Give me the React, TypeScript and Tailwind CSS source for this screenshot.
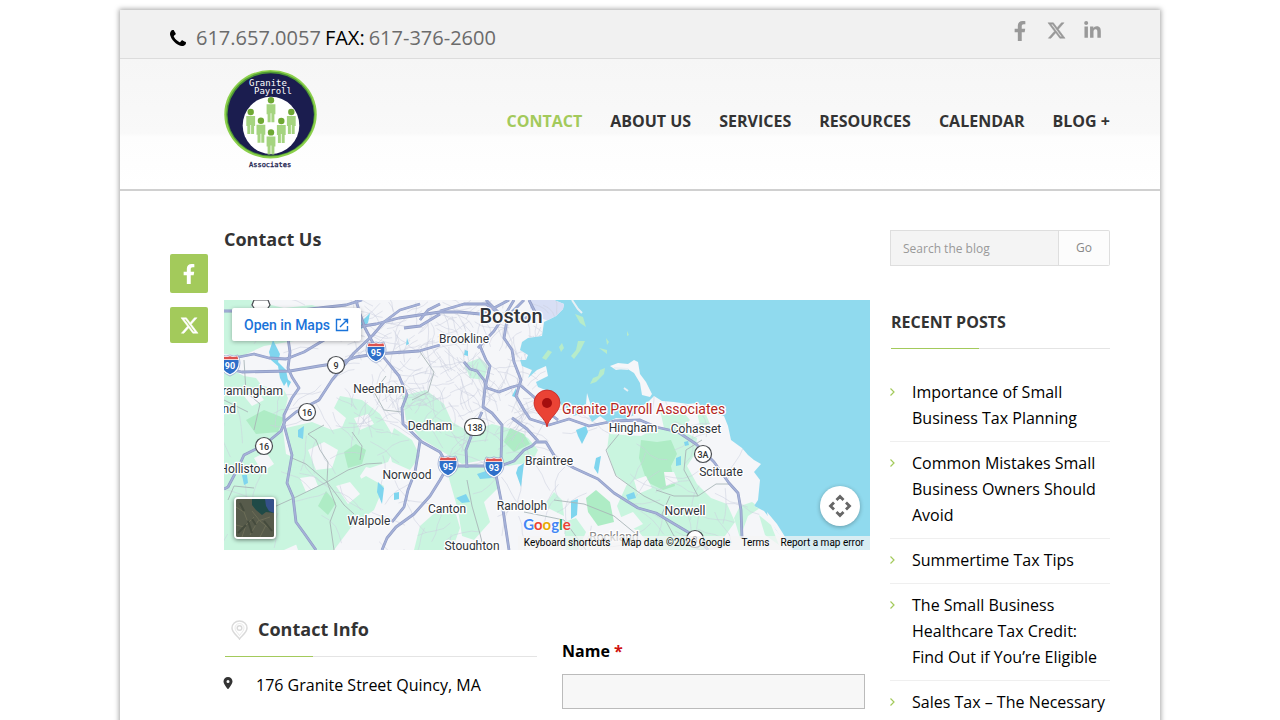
import React from "react";
import { FaFacebookF, FaLinkedinIn } from "react-icons/fa";
import { FaLocationDot, FaXTwitter } from "react-icons/fa6";

const NAV = ["Contact", "About Us", "Services", "Resources", "Calendar", "Blog +"];

const POSTS = [
  "Importance of Small Business Tax Planning",
  "Common Mistakes Small Business Owners Should Avoid",
  "Summertime Tax Tips",
  "The Small Business Healthcare Tax Credit: Find Out if You’re Eligible",
  "Sales Tax – The Necessary",
];

const PEOPLE: [number, number][] = [
  [47, 30.3],
  [26.7, 42],
  [67.3, 42],
  [36.9, 50.8],
  [57.3, 51],
  [47, 62.4],
];

function PhoneIcon() {
  return (
    <svg viewBox="192 128 1408 1408" className="mr-[10px] h-4 w-4 text-black" fill="currentColor" aria-hidden="true">
      <path d="M1600 1240q0 27-10 70.500t-21 68.500q-21 50-122 106-94 51-186 51-27 0-53-3.500t-57.500-12.500-47-14.500-55.500-20.500-49-18q-98-35-175-83-127-79-264-216t-216-264q-48-77-83-175-3-9-18-49t-20.500-55.500-14.500-47-12.500-57.500-3.500-53q0-92 51-186 56-101 106-122 25-11 68.500-21t70.500-10q14 0 21 3 18 6 53 76 11 19 30 54t35 63.500 31 53.500q3 4 17.500 25t21.500 35.500 7 28.500q0 20-28.500 50t-62 55-62 53-28.500 46q0 9 5 22.500t8.500 20.500 14 24 11.500 19q76 137 174 235t235 174q2 1 19 11.500t24 14 20.500 8.500 22.500 5q18 0 46-28.500t53-62 55-62 50-28.500q14 0 28.500 7t35.500 21.500 25 17.500q25 15 53.500 31t63.500 35 54 30q70 35 76 53 3 7 3 21z" />
    </svg>
  );
}

function Logo() {
  return (
    <svg viewBox="0 0 93 100" className="h-[100px] w-[93px]" role="img" aria-label="Granite Payroll Associates">
      <ellipse cx="46.5" cy="44.2" rx="46.2" ry="44.2" fill="#8bd04b" />
      <ellipse cx="46.5" cy="44" rx="44.3" ry="42.5" fill="#4f9a35" />
      <ellipse cx="46.7" cy="44.4" rx="43.2" ry="41.2" fill="#1b1d4f" />
      <ellipse cx="47" cy="55.4" rx="28.3" ry="28.6" fill="#fff" />
      {PEOPLE.map(([x, y]) => (
        <g key={`${x}-${y}`} transform={`translate(${x} ${y})`}>
          <circle r="3.2" fill="#6fa834" />
          <path d="M-4.4 4h8.800v10h-1v8h-3v-9h-.8v9h-3v-8h-1z" fill="#a5d480" />
        </g>
      ))}
      <g fontFamily="'DejaVu Sans Mono', monospace">
        <text x="25" y="16" fontSize="9" fill="#fff">Granite</text>
        <text x="30" y="24" fontSize="9" fill="#fff">Payroll</text>
        <text x="25" y="97" fontSize="7" fill="#1b1d4f" stroke="#1b1d4f" strokeWidth=".3">Associates</text>
      </g>
    </svg>
  );
}

const LAND =
  "M0 0H330L340 4L339 9L332 16L320 22L318 36L304 38L298 42L296 50L304 55L302 60L296 60L298 66L308 70L304 78L313 70L322 66L324 76L312 82L314 87L324 91L332 98L340 108L350 116L356 114L358 106L362 104L363 93L367 106L364 114L368 122L376 116L384 122L392 118L402 119L410 115L416 107L424 102L430 96L438 101L450 102L464 104L474 103L482 110L490 108L493 114L500 116L504 126L507 140L518 148L524 155L530 160L537 164L530 172L536 180L534 200L530 206L540 211L547 220L552 230L560 240L566 250H0Z";

const GREENS = [
  "M0 0h26l34 8 28-3 22 7 18 14-28 8-30 7-30 5-22 10-18-2z",
  "M0 66l20 10 12 2 6 8 22 4 4 8-6 24 4 32 18 8 10-6 8-20 18-4 6-14-12-10 6-12 22 4 18 14 12 20-4 18-20 12-8 12 6 14-16 8-22-2-14 14-12 32-18 8H0z",
  "M60 190l22-18 28-6 18 18 14-8 18 10-10 24-22 16-18 24H74l-10-30z",
  "M62 128l26-6 20 8 24-6 30 6 10 14-8 18-18 6-16-4-18 6-22-6-22 4z",
  "M178 96l24-6 18 14 8 18 18 10 22-8 16 4 20 10 10 12-6 12-24 4-24-6-22 4-22-14-20-12-14-18z",
  "M222 168l30-4 20 8 2 16-14 14 6 20-16 18-12-4-4-26z",
  "M196 226l18-16 18 4 4 14-8 22h-38z",
  "M385 134l32 2 16-8 22 2 18 8-2 16-8 12 10 18 14 14 16 6 8 18-10 14-18 12-10 8h-38l-20-24-16-10-6-16 10-22-12-10-8-24z",
  "M320 206l10-14 8 8 2 16z",
  "M240 64l16-6 8 8-4 14-14-2z",
  "M436 110l18-4 12 14-10 12-16-4zM472 108l8 2 6 14-10 2z",
  "M340 222l12-4 10 14-8 18h-12z",
  "M170 128l18 12 8 16-10 14-18-8-4-16z",
  "M516 206l12-4 8 6-12 8-8 22-6-20zM535 215l12 10 8 20-14-10z",
];

const DEEP_GREENS = [
  "M417 140l16 2 14-2 6 14-6 12 4 20-12 4-16-8-8-24z",
  "M94 206l8-15 10 12-8 12z",
  "M120 152l12-8 10 6-4 14-14 4z",
  "M22 120l18-10 20 8-6 14-22 2z",
  "M362 198l10-8 14 12 4 20-16 4-10-14z",
  "M286 128l14 6 6 10-16 8-10-10z",
];

const PONDS = [
  "M49 40l4 8 3 6-2 8 8 8 2 10-4 6-4-8-2-12-7-6-2-8z",
  "M62 78l5 4-3 6zM74 130l6-4-1 13-5-2zM18 175l5 0 1 8-4 2z",
  "M137 22l9-9-2 10-8 7z",
  "M154 182l6 6-2 16-5-12zM170 193l5-1 0 7-5 1z",
  "M294 167l6-4-3 24-5-14zM253 174l9-3 6 7-12 1z",
  "M347 201l7-2-1 16-6 4z",
  "M352 130l10-4 2 6-6 12-4-8zM372 158l5-2-3 18-4-6z",
  "M232 198l10-4 4 8-8 1zM183 38l2 6-3 1z",
  "M452 158l5-2 0 9-5 1zM460 142l4-1 1 4-4 1zM402 195l8-3 2 6-8 2z",
  "M241 50l3 1 0 5-4-1zM288 96l4-8 1 10z",
];

const HIGHWAYS = [
  "M0 60L30 54L45 58L62 59L80 52L95 43L112 33L132 27L152 24L175 18L216 12L235 12L256 14L270 8L285 0",
  "M0 11L30 11L62 12L95 8L122 5L138 0",
  "M0 68L18 72L66 71L95 66L115 63L132 57L152 54L195 51L216 45",
  "M132 0L136 14L141 28L150 45L162 60L175 76L183 95L178 108L179 124L198 142L216 152L224 166L276 166L290 161L300 150L308 146L312 142L322 142L331 157L350 168L374 179L390 193L414 208L432 213L452 225L474 238L484 250",
  "M196 4L176 10L160 22L149 35L130 53L108 80L95 100L72 112L61 121L57 131L40 145L20 155L14 168L4 187L0 189",
  "M64 38L66 52L64 68L68 77L75 88L68 98L60 115L60 125L68 155L63 183L69 197L72 222L80 233L92 250",
  "M224 166L216 180L206 196L190 214L172 227L163 238L158 250",
  "M196 141L194 154L191 172L184 190L180 207L168 222",
  "M283 20L280 38L288 50L290 62L297 80L292 96L300 110L306 119L325 125L345 119L365 126L390 121L416 120L432 127L454 132L472 144L490 162L505 183L514 193L517 210L518 238",
  "M296 85L310 97L318 108L334 120",
  "M240 62L246 69L253 71L260 80L263 88L275 92L288 87L296 85",
  "M256 46L262 60L266 66L261 88L259 107L268 113L278 125L277 160L272 175L279 210L285 250",
  "M216 11L240 4L262 4L282 18L300 0M254 48L270 31L284 10L290 0M262 0L276 14L296 22M305 0L312 14L296 20",
  "M288 118L303 129L314 141M243 168L242 150L248 134L258 112",
  "M216 4L204 10L196 20M216 14L196 26L180 28",
];

const LOCALS = [
  "M68 158L82 164L103 182L112 194L120 205L130 214",
  "M50 207L72 197L103 182L124 170L142 164L158 163",
  "M103 182L104 162L96 150L92 140L84 134L100 125",
  "M103 182L112 206L106 222L110 250",
  "M136 160L138 146L128 132",
  "M243 180L248 206L256 234L260 250",
  "M395 134L382 150L392 176L420 196L440 206L480 215",
  "M432 190L450 196L474 196L492 184L505 184M446 196L438 214L450 236L476 250",
  "M474 196L460 170L462 150L478 140",
  "M20 60L22 92L36 104L30 130M0 100L24 112M30 188L10 186L4 200",
  "M162 76L150 92L160 110L178 112M196 52L210 72L204 92L188 100",
  "M330 200L360 204L390 216L412 234M300 212L340 220L362 250",
];

/* Repeatable pseudo-random side streets, denser around the city */
function sideStreets() {
  let seed = 7;
  const rnd = () => {
    seed = (seed * 16807) % 2147483647;
    return seed / 2147483647;
  };
  const out: string[] = [];
  for (let i = 0; i < 400; i++) {
    const city = i < 220;
    let x = city ? 130 + rnd() * 190 : rnd() * 530;
    let y = city ? rnd() * 135 : rnd() * 250;
    let a = rnd() * Math.PI * 2;
    let d = `M${x.toFixed(1)} ${y.toFixed(1)}`;
    for (let k = 0; k < 4; k++) {
      a += (rnd() - 0.5) * 0.9;
      const len = city ? 6 : 9;
      x += Math.cos(a) * len;
      y += Math.sin(a) * len;
      d += `L${x.toFixed(1)} ${y.toFixed(1)}`;
    }
    out.push(d);
  }
  return out.join("");
}
const SIDE_STREETS = sideStreets();

type Town = { name: string; x: number; y: number; anchor?: "middle" | "end"; fill?: string };
const TOWNS: Town[] = [
  { name: "Brookline", x: 240, y: 43 },
  { name: "Needham", x: 155, y: 93 },
  { name: "Framingham", x: 59, y: 95, anchor: "end" },
  { name: "Ashland", x: 12, y: 113, anchor: "end" },
  { name: "Holliston", x: 43, y: 173, anchor: "end" },
  { name: "Dedham", x: 206, y: 130 },
  { name: "Norwood", x: 183, y: 179 },
  { name: "Walpole", x: 145, y: 225 },
  { name: "Canton", x: 223, y: 213 },
  { name: "Stoughton", x: 248, y: 250 },
  { name: "Randolph", x: 298, y: 210 },
  { name: "Braintree", x: 325, y: 165 },
  { name: "Hingham", x: 409, y: 132 },
  { name: "Cohasset", x: 472, y: 133 },
  { name: "Scituate", x: 497, y: 176 },
  { name: "Norwell", x: 461, y: 215 },
  { name: "Rockland", x: 390, y: 241, fill: "#888" },
];

function Interstate({ x, y, n }: { x: number; y: number; n: string }) {
  return (
    <g transform={`translate(${x} ${y})`}>
      <path d="M-8-10q4 2 8 0q4 2 8 0q2 4 2 8q0 9-10 13q-10-4-10-13q0-4 2-8z" fill="#fff" stroke="#7b8fc0" strokeWidth=".6" />
      <path d="M-7.400-8.800q4 1.600 7.400 0q3.400 1.600 7.400 0l.8 3H-8.200z" fill="#dc5350" />
      <path d="M-8.500-5h17q1.200 10-8.500 14.300q-9.700-4.300-8.500-14.300z" fill="#2e6fc9" />
      <text y="4" fontSize="9" fontWeight="700" textAnchor="middle" fill="#fff">{n}</text>
    </g>
  );
}

function Route({ x, y, n, w = 8.5 }: { x: number; y: number; n: string; w?: number }) {
  return (
    <g transform={`translate(${x} ${y})`}>
      <rect x={-w} y="-8.500" width={w * 2} height="17" rx="8.500" fill="#fff" stroke="#4a4d52" strokeWidth="1.200" />
      <text y="3.500" fontSize="9" fontWeight="500" textAnchor="middle" fill="#333">{n}</text>
    </g>
  );
}

function MapDrawing() {
  return (
    <svg
      viewBox="0 0 646 250"
      preserveAspectRatio="xMidYMid slice"
      className="block h-full w-full"
      fontFamily="Roboto, sans-serif"
      role="img"
      aria-label="Map of the area south of Boston"
    >
      <defs>
        <clipPath id="land"><path d={LAND} /></clipPath>
      </defs>
      <rect width="646" height="250" fill="#90daee" />
      <path d={LAND} fill="#f5f6f9" />
      <g clipPath="url(#land)">
        {GREENS.map((d) => <path key={d} d={d} fill="#c9f5df" />)}
        {DEEP_GREENS.map((d) => <path key={d} d={d} fill="#aeecc5" />)}
        <path d="M306 0h36v20l-14 2-12-4-10-10z" fill="#d8dff5" />
        <path
          d="M90 56l12-4 8 8-10 8zM20 96l14-4 6 8-12 6zM84 150l16-8 14 8-6 18-16 2zM112 186l14-4 10 12-12 10zM30 158l12-6 8 12-12 8zM76 178l14-2 4 10-12 6zM410 180l12-4 6 12-14 6zM440 172l10 0 4 10-12 4zM395 218l14-6 10 12-16 8zM20 20l16-6 10 8-14 8zM130 118l14-4 6 10-14 6z"
          fill="#f5f6f9"
        />
        <path d={SIDE_STREETS} fill="none" stroke="#ccd0de" strokeOpacity=".75" strokeWidth=".7" />
        {PONDS.map((d) => <path key={d} d={d} fill="#7fd5ee" />)}
        {LOCALS.map((d) => <path key={d} d={d} fill="none" stroke="#a9b5b8" strokeWidth=".9" />)}
        {HIGHWAYS.map((d) => (
          <path key={d} d={d} fill="none" stroke="#8f9bc4" strokeWidth="2.800" strokeLinejoin="round" />
        ))}
        {HIGHWAYS.map((d) => (
          <path key={`${d}c`} d={d} fill="none" stroke="#a5b1d8" strokeWidth="1.600" strokeLinejoin="round" />
        ))}
      </g>
      <path d="M386 66l8-3 10 1 6-4 4 2 2 12 6 8 6 12-2 3-8-2-2-12-6-10-8-5-10 2z" fill="#f5f6f9" />
      <path
        d="M351 14l8 3 3 10-6-4zM324 50l4 2-6 8-4-2zM354 41l7 0-5 10-6 8-3-3 5-6zM376 70l5-2-1 6-8 8-6 2 3-6 5-2zM375 48l8 2 0 4zM338 43l2 5-3 4-2-5zM382 38l3 4-2 3zM403 31l2 4-2 1z"
        fill="#b7ecc9"
      />
      <path d="M543 212l10 12 10 16 6 10h-4l-9-14-12-18z" fill="#f5f6f9" />
      <path d="M348 0l6 9 4 4M390 68l14 1M400 88l4 3" fill="none" stroke="#e8f0f5" strokeWidth="2" />
      <path d="M30 0h14l2 5-4 6H32l-4-6z" fill="#fff" stroke="#4a4d52" strokeWidth="1.200" />
      <Interstate x={6} y={65} n="90" />
      <Interstate x={152} y={52} n="95" />
      <Interstate x={224} y={166} n="95" />
      <Interstate x={270} y={167} n="93" />
      <Route x={112} y={65} n="9" />
      <Route x={83} y={112} n="16" />
      <Route x={40} y={146} n="16" />
      <Route x={251} y={127} n="138" w={10.5} />
      <Route x={479} y={154} n="3A" />
      <Route x={471} y={239} n="3" />
      <g fontSize="12" stroke="#fff" strokeWidth="2.500" strokeLinejoin="round" paintOrder="stroke">
        {TOWNS.map((t) => (
          <text key={t.name} x={t.x} y={t.y} textAnchor={t.anchor ?? "middle"} fill={t.fill ?? "#30343a"}>
            {t.name}
          </text>
        ))}
        <text x="287" y="23" fontSize="20" fontWeight="500" textAnchor="middle" fill="#30343a">Boston</text>
        <text x="338" y="114" fontSize="14" fill="#b3261e">Granite Payroll Associates</text>
      </g>
      <path d="M323 127c-1-9-13-14-13-24a13 13 0 0 1 26 0c0 10-12 15-13 24z" fill="#ea4335" stroke="#c5221f" strokeWidth=".8" />
      <circle cx="323" cy="103" r="5" fill="#a50e0e" />
    </svg>
  );
}

function GoogleMark() {
  const letters: [string, string][] = [
    ["G", "text-[#4285f4]"],
    ["o", "text-[#ea4335]"],
    ["o", "text-[#e8a900]"],
    ["g", "text-[#4285f4]"],
    ["l", "text-[#34a853]"],
    ["e", "text-[#ea4335]"],
  ];
  return (
    <a
      href="#google"
      className="absolute bottom-4 left-1/2 -translate-x-1/2 font-[Lato,sans-serif] text-[15px] leading-5 font-bold [text-shadow:0_0_2px_#fff,0_0_2px_#fff]"
    >
      {letters.map(([c, cls], i) => <span key={i} className={cls}>{c}</span>)}
    </a>
  );
}

function MapPanel() {
  return (
    <div className="relative h-[250px] overflow-hidden font-[Roboto,sans-serif]">
      <MapDrawing />
      <a
        href="#maps"
        className="absolute top-2 left-2 flex h-[33px] items-center gap-[5px] rounded-xs bg-white px-3 text-sm font-medium whitespace-nowrap text-[#1a73d9] shadow-[0_1px_4px_rgba(0,0,0,0.3)]"
      >
        Open in Maps
        <svg viewBox="0 0 14 14" className="h-[14px] w-[14px]" fill="none" stroke="currentColor" strokeWidth="1.400">
          <path d="M6 1.500H1.500v11h11V8M8.500 1.500h4v4M12.500 1.500L5 9" />
        </svg>
      </a>
      <button
        type="button"
        aria-label="Show satellite imagery"
        className="absolute bottom-[11px] left-[10px] h-[42px] w-[42px] overflow-hidden rounded border-2 border-white bg-[#57594a] shadow-[0_1px_4px_rgba(0,0,0,0.5)]"
      >
        <svg viewBox="0 0 38 38" preserveAspectRatio="none" className="h-full w-full">
          <path d="M0 0h38v38H0z" fill="#575b4b" />
          <path d="M16 0h22v14l-8-1-4 3-6-5-4-5z" fill="#1f4a47" />
          <path d="M29 0h9v14l-5-2-3-5z" fill="#35508a" />
          <path d="M0 8l8 5 3 8M6 38l4-12 8-8M14 36l8-14 12-4M24 38l6-12M0 26l8 2M16 12l8 10 10 8" fill="none" stroke="#6c6d57" strokeWidth="1" />
          <path d="M4 4l4 8M12 22l4 12M28 22l8 10M20 26l-4-6M2 34l8-8" fill="none" stroke="#454b3d" strokeWidth="2" />
        </svg>
      </button>
      <button
        type="button"
        aria-label="Map camera controls"
        className="absolute right-[10px] bottom-6 flex h-10 w-10 items-center justify-center rounded-full bg-white text-[#666] shadow-[0_1px_4px_rgba(0,0,0,0.3)]"
      >
        <svg viewBox="0 0 24 24" className="h-6 w-6" fill="none" stroke="currentColor" strokeWidth="2.800">
          <path d="M8.500 6L12 2.500L15.500 6M8.500 18L12 21.500L15.500 18M6 8.500L2.500 12L6 15.500M18 8.500L21.500 12L18 15.500" />
        </svg>
      </button>
      <GoogleMark />
      <div className="absolute right-0 bottom-0 flex h-[14px] items-center gap-[11px] bg-[#f5f5f5]/70 px-1.5 text-[10px] leading-[14px] whitespace-nowrap text-black">
        <button type="button">Keyboard shortcuts</button>
        <span>Map data ©2026 Google</span>
        <a href="#terms">Terms</a>
        <a href="#report">Report a map error</a>
      </div>
    </div>
  );
}

function Rule() {
  return (
    <div className="ml-px h-px bg-[#e4e4e4]">
      <div className="h-px w-[88px] bg-[#a3ca5b]" />
    </div>
  );
}

export default function App() {
  return (
    <div className="min-h-screen bg-white px-4 pt-[10px] font-['Open_Sans',sans-serif] text-base text-black">
      <div className="mx-auto min-h-screen max-w-[1040px] bg-white shadow-[0_0_5px_1px_rgba(0,0,0,0.35)]">
        <div className="flex h-[49px] justify-between border-b border-[#dcdcdc] bg-[#f1f1f1] px-[50px]">
          <p className="flex items-center pt-[7px] text-xl text-[#6b6b6b]">
            <PhoneIcon />
            <a href="tel:6176570057">617.657.0057</a>
            <span className="mx-1 text-black">FAX:</span>
            <a href="tel:6173762600">617-376-2600</a>
          </p>
          <div className="flex items-center gap-4 pr-2 pb-[7px] text-[#999]">
            <a href="#facebook" aria-label="Facebook" className="flex w-5 justify-center"><FaFacebookF size={20} /></a>
            <a href="#x" aria-label="X" className="flex w-5 justify-center"><FaXTwitter size={19} stroke="currentColor" strokeWidth={14} /></a>
            <a href="#linkedin" aria-label="LinkedIn" className="flex w-5 justify-center"><FaLinkedinIn size={19} /></a>
          </div>
        </div>

        <header className="flex h-[132px] justify-between border-b-2 border-[#d0d0d0] bg-[linear-gradient(#f6f6f6_0%,#f9f9f9_57%,#fdfdfd_60%,#ffffff_100%)] pr-[50px] pl-[104px]">
          <a href="#home" className="pt-[11px]"><Logo /></a>
          <nav className="flex items-center gap-7 pb-[7px] font-bold whitespace-nowrap text-[#333] uppercase">
            {NAV.map((item, i) => (
              <a key={item} href={`#${item}`} className={i === 0 ? "text-[#a3ca5b]" : ""}>{item}</a>
            ))}
          </nav>
        </header>

        <div className="flex px-[50px] pt-[39px]">
          <aside className="mr-4 flex w-[38px] shrink-0 flex-col gap-[14px] pt-6 text-white">
            <a href="#share-facebook" aria-label="Share on Facebook" className="flex h-[39px] items-center justify-center rounded-xs bg-[#a3ca5b]">
              <FaFacebookF size={20} />
            </a>
            <a href="#share-x" aria-label="Share on X" className="flex h-9 items-center justify-center rounded-xs bg-[#a3ca5b]">
              <FaXTwitter size={19} stroke="currentColor" strokeWidth={14} />
            </a>
          </aside>

          <main className="min-w-0 flex-1">
            <h1 className="mb-[52px] text-lg leading-[18px] font-bold text-[#333]">Contact Us</h1>
            <MapPanel />
            <div className="grid grid-cols-2 gap-5 pt-[66px]">
              <section>
                <h2 className="flex h-[27px] items-center gap-[10px] pl-[7px] text-lg leading-[27px] font-bold text-[#333]">
                  <svg viewBox="0 0 17 20" className="h-5 w-[17px]" fill="none" stroke="#dadada" strokeWidth="1.500">
                    <path d="M8.500 19C7 16 1 13 1 8a7.500 7 0 0 1 15 0c0 5-6 8-7.500 11z" />
                    <path d="M8.500 15.500C7 13 4 11 4 8a4.500 4.500 0 0 1 9 0c0 3-3 5-4.500 7.500z" strokeWidth=".6" />
                    <circle cx="8.500" cy="8" r="2.300" />
                  </svg>
                  Contact Info
                </h2>
                <div className="mt-[13px]"><Rule /></div>
                <address className="mt-[15px] flex items-start leading-[26px] not-italic">
                  <FaLocationDot size={12} className="mt-[5px] mr-5 w-3 -translate-x-[2px] text-[#333]" aria-hidden="true" />
                  176 Granite Street Quincy, MA
                </address>
              </section>
              <form className="px-[5px] pt-[22px]">
                <label htmlFor="name" className="block leading-[26px] font-bold">
                  Name <span className="text-[#d0120f]">*</span>
                </label>
                <input id="name" type="text" className="mt-[10px] block h-[35px] w-full border border-[#bbb] bg-[#f7f7f7] px-2 outline-none" />
              </form>
            </div>
          </main>

          <aside className="ml-5 w-[220px] shrink-0">
            <form className="flex h-9 text-xs">
              <input
                type="search"
                aria-label="Search the blog"
                placeholder="Search the blog"
                className="h-full min-w-0 flex-1 border border-[#dedede] bg-[#f4f4f4] px-3 placeholder-[#999] outline-none"
              />
              <button type="button" className="h-full w-[51px] rounded-r-xs border border-l-0 border-[#dedede] bg-[#fcfcfc] text-[#888]">Go</button>
            </form>
            <h2 className="mt-[44px] mb-[13px] pl-px leading-[25px] font-bold text-[#333]">RECENT POSTS</h2>
            <Rule />
            <ul className="mt-[22px]">
              {POSTS.map((post) => (
                <li key={post} className="flex items-start border-b border-[#efefef] pt-2 pb-[10px] leading-[26px]">
                  <svg viewBox="0 0 5 8" className="mt-[9px] mr-[17px] h-2 w-[5px] shrink-0" fill="none" stroke="#a3ca5b" strokeWidth="1.200">
                    <path d="M.5.5L4 4L.5 7.500" />
                  </svg>
                  <a href="#post">{post}</a>
                </li>
              ))}
            </ul>
          </aside>
        </div>
      </div>
    </div>
  );
}
